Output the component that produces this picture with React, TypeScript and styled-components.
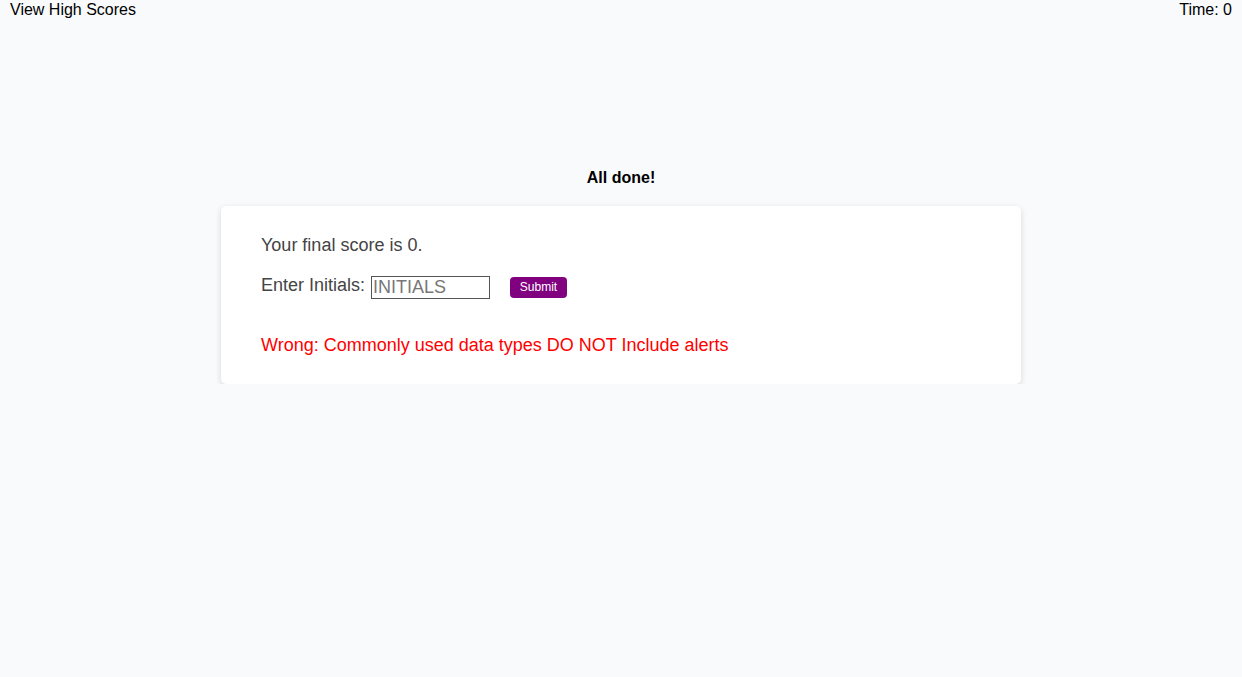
import styled, { createGlobalStyle } from "styled-components";

const Global = createGlobalStyle`
  html, body {
    margin: 0;
    padding: 0;
    background: #f9fafc;
    font-family: "Liberation Sans", Arial, sans-serif;
  }
`;

const Header = styled.header`
  display: flex;
  justify-content: space-between;
  align-items: flex-start;
  padding: 0 10px;
  height: 20px;
  font-size: 16px;
  line-height: 20px;
  color: #000;
`;

const HeaderLink = styled.a`
  color: #000;
  text-decoration: none;
  cursor: pointer;
`;

const Main = styled.main`
  display: flex;
  flex-direction: column;
  align-items: center;
  padding-top: 149px;
`;

const Title = styled.h2`
  margin: 0 0 19px;
  font-size: 16px;
  line-height: 18px;
  font-weight: bold;
  color: #000;
`;

const Card = styled.section`
  box-sizing: border-box;
  width: 800px;
  background: #fff;
  border-radius: 5px;
  box-shadow: 0 2px 6px rgba(0, 0, 0, 0.14);
  padding: 29px 40px 28px;
  color: #444;
  font-size: 18px;
`;

const Score = styled.p`
  margin: 0 0 20px;
  line-height: 21px;
`;

const Row = styled.form`
  display: flex;
  align-items: center;
  height: 22px;
  margin: 0 0 37px;
`;

const Label = styled.label`
  line-height: 21px;
  margin-top: -4px;
`;

const Input = styled.input`
  box-sizing: border-box;
  width: 119px;
  height: 23px;
  margin-left: 6px;
  padding: 0 1px;
  border: 1px solid #555;
  font-family: "Liberation Sans", Arial, sans-serif;
  font-size: 18px;
  color: #444;
  &::placeholder {
    color: #777;
  }
`;

const Button = styled.button`
  box-sizing: border-box;
  width: 57px;
  height: 21px;
  margin-left: 20px;
  border: none;
  border-radius: 4px;
  background: #800080;
  color: #fff;
  font-family: "Liberation Sans", Arial, sans-serif;
  font-size: 12px;
  padding: 0;
  cursor: pointer;
`;

const Feedback = styled.p<{ wrong?: boolean }>`
  margin: 0;
  line-height: 21px;
  color: ${({ wrong }) => (wrong ? "#ff0000" : "#008000")};
`;

export default function App() {
  return (
    <>
      <Global />
      <Header>
        <HeaderLink>View High Scores</HeaderLink>
        <span>Time: 0</span>
      </Header>
      <Main>
        <Title>All done!</Title>
        <Card>
          <Score>Your final score is 0.</Score>
          <Row onSubmit={(e) => e.preventDefault()}>
            <Label htmlFor="initials">Enter Initials:</Label>
            <Input id="initials" placeholder="INITIALS" />
            <Button type="submit">Submit</Button>
          </Row>
          <Feedback wrong>Wrong: Commonly used data types DO NOT Include alerts</Feedback>
        </Card>
      </Main>
    </>
  );
}
